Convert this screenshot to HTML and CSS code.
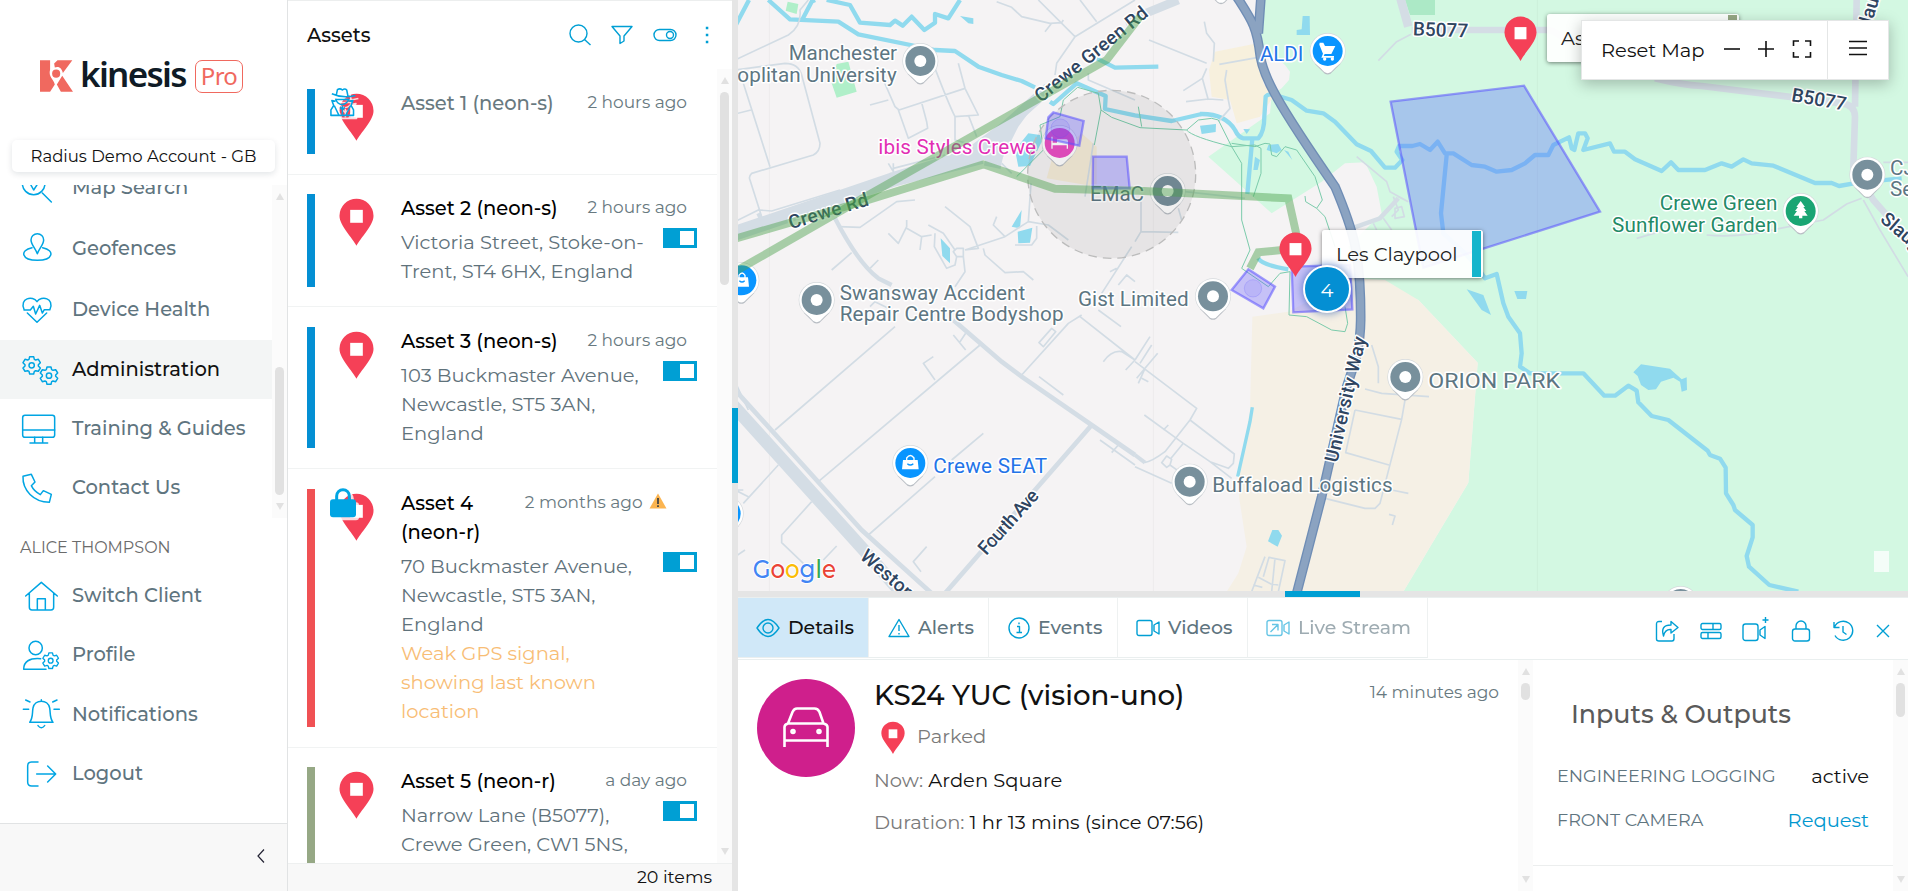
FILE: index.html
```html
<!DOCTYPE html>
<html lang="en">
<head>
  <meta charset="UTF-8">
  <title>Kinesis Pro</title>
  <meta name="viewport" content="width=device-width, initial-scale=1.0">
  <link rel="stylesheet" href="styles.css">
</head>
<body>

<svg class="defs" width="0" height="0">
  <symbol id="pin" viewBox="0 0 36 49">
    <path d="M18 48.500C14 40 .5 28 .5 17.500a17.500 17.500 0 0 1 35 0C35.500 28 22 40 18 48.500z" fill="#f54057"/>
    <path d="M11.500 11.500h13v13.300h-13z" fill="#fff"/>
  </symbol>
  <symbol id="gear" viewBox="-30 -30 60 60">
    <path d="M-8-18-6-26H6L8-18 12-16 20-18 26-8 20-2V2L26 8 20 18 12 16 8 18 6 26H-6L-8 18-12 16-20 18-26 8-20 2V-2L-26-8-20-18-12-16z"/>
    <circle r="8"/>
  </symbol>
  <symbol id="poi" viewBox="-60 -60 120 140">
    <path d="M-39 38-10 67Q0 74 10 67L39 38z" fill="#b9bec4"/>
    <circle r="54" fill="#d5d9dc"/>
    <path d="M-39 34-10 63Q0 70 10 63L39 34z" fill="#fff"/>
    <circle r="52" fill="#fff"/>
    <circle r="45"/>
  </symbol>
</svg>

<div class="app">
  <aside class="sidebar">
    <div class="logo">
      <svg class="logo-mark" viewBox="0 0 98 94">
        <path d="M0 0H30V28C24 50 40 56 44 72L30 94H0z M42 10 52 0H96L68 38C64 20 52 18 44 22z M98 94H62L50 72 66 46z" fill="#f0695f"/>
        <circle cx="48" cy="40" r="12" fill="#f0695f"/>
      </svg>
      <span class="logo-name">kinesis</span>
      <span class="logo-pro">Pro</span>
    </div>
    <div class="account">Radius Demo Account - GB</div>
    <div class="nav-scroll">
      <nav class="nav">
        <a class="nav-item tall"><svg viewBox="0 0 108 96"><circle cx="35" cy="34" r="34"/><path d="M61 63 88 90M24 34 35 54 48 34"/></svg><span>Map Search</span></a>
        <a class="nav-item tall"><svg viewBox="0 0 108 96"><path d="M46 62C40 46 27 34 27 21a19 19 0 0 1 38 0C65 34 52 46 46 62zM30 44C-8 52-2 82 46 82S100 52 62 44"/></svg><span>Geofences</span></a>
        <a class="nav-item tall"><svg viewBox="0 0 108 96"><path d="M6 46C-8 12 32 4 45 23 58 4 98 12 84 46M6 48H25L34 37 41 60 53 34 61 57 67 47H84M16 57 45 85 74 57"/></svg><span>Device Health</span></a>
        <a class="nav-item active"><svg viewBox="0 0 108 96"><use href="#gear" x="-1" y="4" width="60" height="60"/><use href="#gear" x="51" y="35" width="60" height="60"/></svg><span>Administration</span></a>
        <a class="nav-item"><svg viewBox="0 0 108 96"><rect x="2" y="7" width="96" height="66" rx="7"/><path d="M2 51H98M38 73V90M62 73V90M24 90H77"/></svg><span>Training &amp; Guides</span></a>
        <a class="nav-item"><svg viewBox="0 0 108 96"><path d="M3 13 28 7 39 30 28 41C34 54 44 62 55 68L64 56 88 67 82 91C35 90 1 55 3 13z"/></svg><span>Contact Us</span></a>
      </nav>
      <div class="scrollbar nav-bar"><i class="up"></i><b></b><i class="down"></i></div>
    </div>
    <div class="user-name">ALICE THOMPSON</div>
    <nav class="nav user-nav">
      <a class="nav-item"><svg viewBox="0 0 108 96"><path d="M11 48 58 7 106 48M22 39V82q0 8 8 8H87q8 0 8-8V39M46 90V56H70V90"/></svg><span>Switch Client</span></a>
      <a class="nav-item"><svg viewBox="0 0 108 96"><circle cx="41" cy="27" r="20"/><path d="M56 59C22 56 5 68 5 91H72"/><use href="#gear" x="59" y="38" width="54" height="54"/></svg><span>Profile</span></a>
      <a class="nav-item"><svg viewBox="0 0 108 96"><path d="M23 73C34 58 30 45 33 30 38 3 78 3 83 30 86 45 82 58 93 73zM48 83q10 13 20 0M4 34H20M96 34H112M11 6 24 12M105 6 92 12M58 5V10"/></svg><span>Notifications</span></a>
      <a class="nav-item"><svg viewBox="0 0 108 96"><path d="M48 12H29q-12 0-12 12V72q0 12 12 12H48M44 48H100M77 24 101 48 77 72"/></svg><span>Logout</span></a>
    </nav>
    <div class="sidebar-foot"><svg width="8" height="14" viewBox="0 0 8 14"><path d="M7 .5 1 7l6 6.500"/></svg></div>
  </aside>

  <section class="assets">
    <header class="assets-head">
      <h2>Assets</h2>
      <div class="head-icons">
        <svg width="22" height="22" viewBox="0 0 22 22"><circle cx="9.500" cy="9.500" r="8.500"/><path d="M15.500 15.500 21.500 21"/></svg>
        <svg width="22" height="20" viewBox="0 0 22 20"><path d="M1 1.500H21L13 11V16L9 18.500V11z"/></svg>
        <svg width="24" height="14" viewBox="0 0 24 14"><rect x="1" y="1.500" width="22" height="11" rx="5.500"/><circle cx="17" cy="7" r="3.500"/></svg>
        <svg width="4" height="18" viewBox="0 0 4 18"><path d="M.8 2h2.500M.8 9h2.500M.8 16h2.500" stroke-width="2.500"/></svg>
      </div>
    </header>
    <div class="list-wrap">
      <ul class="list">
        <li class="asset a1 muted">
          <span class="bar blue"></span>
          <div class="marker"><svg class="pin"><use href="#pin"/></svg>
            <svg class="badge spy" viewBox="0 0 84 96"><path d="M6 18Q40 34 82 24M20 24 24 5Q32-1 40 6 48-1 54 6L58 26M18 34Q22 50 38 54 56 50 62 34M20 37H60M18 42 6 40 12 56 3 70V88H76V70L68 56 74 40 62 42M14 57 28 86M66 57 52 86M40 58V84M32 62 40 70 48 62"/></svg>
          </div>
          <div class="info"><div class="row"><h3>Asset 1 (neon-s)</h3><time>2 hours ago</time></div></div>
        </li>
        <li class="asset a2">
          <span class="bar blue"></span>
          <div class="marker"><svg class="pin"><use href="#pin"/></svg></div>
          <div class="info"><div class="row"><h3>Asset 2 (neon-s)</h3><time>2 hours ago</time></div>
            <div class="row"><p>Victoria Street, Stoke-on-<br>Trent, ST4 6HX, England</p><span class="toggle"></span></div></div>
        </li>
        <li class="asset a3">
          <span class="bar blue"></span>
          <div class="marker"><svg class="pin"><use href="#pin"/></svg></div>
          <div class="info"><div class="row"><h3>Asset 3 (neon-s)</h3><time>2 hours ago</time></div>
            <div class="row"><p>103 Buckmaster Avenue,<br>Newcastle, ST5 3AN,<br>England</p><span class="toggle"></span></div></div>
        </li>
        <li class="asset a4">
          <span class="bar red"></span>
          <div class="marker"><svg class="pin"><use href="#pin"/></svg>
            <svg class="badge lock" viewBox="0 0 78 90"><path d="M20 40V24a19 19 0 0 1 38 0V40" fill="none" stroke="#00a5e3" stroke-width="9"/><rect y="34" width="78" height="54" rx="9" fill="#00a5e3"/></svg>
          </div>
          <div class="info"><div class="row"><h3>Asset 4<br>(neon-r)</h3><time>2 months ago <svg width="18" height="16" viewBox="0 0 18 16"><path d="M9 .5 17.500 15.500H.5z" fill="#fbb450"/><path d="M9 5v6M9 12.300v1.700" stroke="#444" stroke-width="1.800"/></svg></time></div>
            <div class="row"><p>70 Buckmaster Avenue,<br>Newcastle, ST5 3AN,<br>England<br><em>Weak GPS signal,<br>showing last known<br>location</em></p><span class="toggle"></span></div></div>
        </li>
        <li class="asset a5">
          <span class="bar olive"></span>
          <div class="marker"><svg class="pin"><use href="#pin"/></svg></div>
          <div class="info"><div class="row"><h3>Asset 5 (neon-r)</h3><time>a day ago</time></div>
            <div class="row"><p>Narrow Lane (B5077),<br>Crewe Green, CW1 5NS,</p><span class="toggle"></span></div></div>
        </li>
      </ul>
      <div class="scrollbar list-bar"><i class="up"></i><b></b><i class="down"></i></div>
    </div>
    <footer class="assets-foot">20 items</footer>
  </section>

  <div class="split-v"><span></span></div>

  <main class="main">
    <div class="map">
      <svg class="map-canvas" viewBox="0 0 3510 1773">
        <!-- land -->
        <g transform="translate(1191 0)">
          <path class="park" d="M385 0 375 130 450 195 465 215 462 240 440 265 410 285 405 340 220 470 410 640 560 545 630 490 690 487 725 560 740 640 690 690 640 740 690 840 850 900 1028 1088 1000 1448 805 1775H2400V0z"/>
          <path class="site" d="M352 950 460 935 650 835 750 840 850 900 1028 1088 1000 1448 805 1775H275L310 1720 335 1640 312 1490 310 1430 345 1230z"/>
          <path d="M240 155 375 128 385 250 415 290 375 350 305 370 285 300 230 290 222 210z" fill="#f7f0dd"/>
          <path d="M810 0H900V45H825z" fill="#ace9c6"/>
        </g>
        <g transform="translate(-9 0)">
          <path d="M1040 400 1085 440V560L935 535 950 480z" fill="#f5ecd8"/>
          <path d="M158 5 190 12 185 42 152 32zM305 192 340 185 365 275 305 293 290 250z" fill="#b0efc9"/>
        </g>
        <path class="grid" d="M94 0V1773M1246 0V1773M2398 0V1773"/>

        <!-- water -->
        <g class="water">
          <path transform="translate(-9 0)" d="M0 80 42 0M100 0 165 58 310 65 370 103 600 150 660 153 730 200 800 225 860 243 900 262M200 62 230 5 240 0M275 0 345 15 375 68 465 75 480 62 503 77 530 50 568 90 600 68V42L640 55 675 0M1085 175 1140 203 1270 200M945 305 955 312 1025 250 1112 288 1110 327 1200 346 1310 363 1400 342"/>
          <path transform="translate(1191 0)" d="M195 342Q270 340 300 390 310 412 325 415H370Q388 395 388 350L392 290Q400 280 420 285L470 300 515 332 565 340 600 365 665 433 708 453 750 503H780L802 480 785 455 792 438H832L855 432 885 450 908 425 930 460 955 460 1010 495 1050 500 1085 515 1130 510 1170 490 1200 465 1240 465 1255 435 1302 412 1310 445 1318 450 1330 400H1350L1358 415 1345 450 1425 430 1437 455H1470L1500 478 1580 513 1608 487 1630 510H1710L1760 490 1790 500 1825 478 1850 490 1915 497 2040 549H2090L2112 558 2170 548 2300 535M352 415 337 582M935 465 918 640 925 700 990 760 1030 805 1050 835 1085 822 1105 910 1120 950 1155 1000 1160 1060 1155 1100 1185 1120H1345L1408 1187H1440L1480 1157 1505 1172 1510 1207 1550 1248 1600 1260 1718 1352 1725 1365 1755 1376 1772 1403 1773 1480 1795 1515 1800 1530 1853 1575V1612L1835 1668 1842 1700 1903 1755 1990 1775M370 775Q380 795 460 808"/>
          <path transform="translate(1191 0)" stroke-width="10" d="M352 1222 345 1265 308 1430"/>
        </g>
        <g class="lake">
          <path transform="translate(-9 0)" d="M675 48 715 55V72L700 70zM840 450 880 400 915 405 920 425 885 498 850 500zM830 680 860 630 855 685zM848 695 892 683 885 728 850 730zM617 715 645 745V790L622 768z"/>
          <path transform="translate(1191 0)" d="M503 48H524L525 105H485V90L500 88zM195 377 243 372 242 396 200 402zM325 387 345 388 335 402zM395 450 400 435 430 432 440 450 425 460zM360 470 375 480 368 510H355zM447 450 460 455 472 480zM995 868 1045 885 1068 945 1040 930zM1138 873H1177L1173 897H1147zM412 1590 430 1590 441 1607 428 1640 399 1624zM1495 1117 1518 1093 1605 1106 1640 1138 1655 1132 1656 1170 1640 1175 1635 1145 1615 1133 1578 1145 1563 1168 1540 1170 1518 1155 1508 1128z"/>
        </g>

        <!-- local roads -->
        <g class="lane">
          <path transform="translate(-9 0)" d="M0 180 160 105Q200 80 195 30L220 0M0 210 150 190Q190 190 200 225L255 430Q255 455 235 465L50 520Q40 530 45 540L80 650M25 250 105 500M0 342 48 330M405 315 460 300M445 240 480 320 492 330 690 265 730 345 660 350Q640 310 600 205M490 330 520 415 578 385 575 365 560 308M670 190 690 265M660 350V420L730 440M700 345 725 410M785 5 830 22 860 50 945 70 980 68 985 60M910 0 1020 110 965 190 960 225M1035 0 1085 65M1020 110 1200 0M930 95 950 70M1060 220V240L1200 300M475 490V515L460 490M475 505 630 465M310 680 375 682 485 605 540 600M630 620 705 680 730 745 690 750M460 700 490 730 515 680 515 660M515 685 560 710 555 750M560 710 590 705M580 675 625 700 660 750M600 700 598 740 635 805 660 795 665 770 655 755 665 745H685V770H665M690 750 810 710 880 665 888 550M810 710 775 675 785 650M880 665 940 675 1000 720M745 745 750 765 810 818 865 815 895 840M685 770 690 815 660 860M290 810 350 758M405 805 430 780M0 665 70 630 110 633 315 570M800 490 830 520M1075 430 1050 590M1125 815 1145 805M1150 855 1175 825 1200 845M1190 740 1100 880M905 678V715L890 735H840M0 1145 40 1230"/>
          <path transform="translate(1191 0)" d="M208 65 215 100 238 130 235 185M42 120 215 190M253 193 370 172M215 205 202 235 145 272M202 235 220 300M153 305 220 297 265 300M275 210 270 240 280 300 285 325 250 365M828 103 785 125 730 182M665 470 755 545 765 575 820 605M775 590 790 630 770 650M790 590 820 605M780 625 800 620 808 650 780 655zM715 670 725 690M745 655 770 690M0 725 18 695 130 697M18 695V605M130 625 140 660M150 575 330 595M0 1085 185 1225 165 1260 90 1355Q50 1385 30 1387L0 1365M165 1260 298 1362 295 1390 280 1405 225 1385 145 1330 28 1245M85 1290 100 1275M145 1330 108 1375M95 1368 110 1378 105 1395 95 1402 80 1388zM105 1395 140 1420M225 1385 290 1435M0 1400 110 1450M45 1010 0 1080M50 1035 15 1090M68 1060 30 1105 5 1135M30 1105 10 1150M20 1135 40 1145M710 1035 730 1100V1150M690 1167 740 1180 882 1190M660 1230 800 1258 810 1200M660 1230 632 1358 762 1395M800 1258 735 1510 720 1525H690L570 1495M770 1470 820 1480M762 1543 780 1548 772 1575M350 1775 390 1670M385 1730 402 1672 450 1682 430 1775M370 1732 408 1752 430 1755M420 1675 410 1775M355 1755 382 1762"/>
          <path transform="translate(2286 0)" d="M1150 487H1224M410 715 490 692M620 705Q720 715 840 685L970 660 1040 612 1085 595M1090 600 1140 690 1224 830"/>
          <path transform="translate(-9 900)" d="M120 390 480 80M250 545 735 135M600 240 565 190 595 170M400 705 600 530M650 480 745 400M655 105 692 150M675 125 692 100M0 570 40 590M25 610 130 495M230 605 140 705V728L205 790M0 570 25 570M0 770 30 750M575 740 535 785 558 815M860 225 1000 70 1040 45M912 128 950 85 962 95 925 140zM1090 30 1158 80M1035 50 1200 180M912 230 985 285M1105 185Q1130 150 1160 155L1200 180M1172 210 1200 180M1095 420 1200 495M1130 458 1150 435M405 20 420 5 460 25M265 780 305 738"/>
        </g>

        <!-- main roads -->
        <g class="road">
          <path transform="translate(-9 0)" stroke-width="44" d="M0 700 470 540 740 470"/>
          <path transform="translate(-9 0)" stroke-width="34" d="M730 470 790 400 940 265M750 480 800 490"/>
          <path transform="translate(-9 0)" fill="#d4dde6" stroke="none" d="M460 520 690 450 890 300 960 230 850 380 800 480 740 480z"/>
          <path transform="translate(-9 0)" stroke-width="13" d="M300 655Q370 790 430 835L470 855M70 640 80 660"/>
          <path transform="translate(-9 900)" stroke-width="38" d="M-20 300 400 765 500 880"/>
          <path transform="translate(-9 900)" stroke-width="14" d="M0 270 380 690 590 880M655 60 800 185 860 230 1070 375 1200 465M1070 375 630 880"/>
          <path transform="translate(1191 900)" stroke-width="12" d="M0 465 30 488"/>
          <path transform="translate(1191 0)" stroke-width="26" d="M-30 65 130 0M795 -10 820 80"/>
          <path transform="translate(1191 0)" stroke-width="13" d="M650 685 735 655 790 595"/>
          <path transform="translate(1191 0)" stroke-width="20" d="M830 90H1240Q1270 95 1300 130M1560 235Q1640 255 1700 258L2120 310Q2160 315 2160 350L2155 500 2215 600 2330 730M2165 0 2160 320"/>
        </g>
        <g transform="translate(1191 0)" class="trunk">
          <path d="M305-10C350 60 366 80 376 170 386 230 420 300 600 560 655 690 678 760 677 960 676 1050 655 1100 635 1160L560 1490 485 1780M378-10 370 100"/>
          <path class="core" d="M305-10C350 60 366 80 376 170 386 230 420 300 600 560 655 690 678 760 677 960 676 1050 655 1100 635 1160L560 1490 485 1780M378-10 370 100"/>
        </g>
        <g class="path">
          <path transform="translate(-9 0)" d="M845 530 925 450 915 375 975 350 985 300 1028 262 1090 280 1098 330 1078 435M1098 330 1130 352 1215 383 1355 390 1390 360 1430 355 1450 360 1490 440 1520 490V660L1545 750 1520 805M1355 390Q1370 410 1490 440L1560 435 1578 445V520L1555 590M1490 430 1560 440 1590 430 1605 432 1610 465 1625 470 1650 440 1685 450 1740 530 1762 600 1745 625 1712 605 1710 588M1745 625 1770 650 1800 740M1520 805 1600 860 1635 820 1665 815 1662 945 1715 950 1790 990 1830 995 1838 970 1830 920M1210 320 1220 380"/>
        </g>

        <!-- place markers -->
        <g fill="#78909c">
          <use href="#poi" x="487" y="123" width="120" height="140"/>
          <use href="#poi" x="1229" y="513" width="120" height="140"/>
          <use href="#poi" x="176" y="840" width="120" height="140"/>
          <use href="#poi" x="1365" y="829" width="120" height="140"/>
          <use href="#poi" x="1942" y="1071" width="120" height="140"/>
          <use href="#poi" x="1295" y="1385" width="120" height="140"/>
          <use href="#poi" x="3328" y="464" width="120" height="140"/>
          <use href="#poi" x="2768" y="1752" width="120" height="140"/>
          <use href="#poi" x="1389" y="-118" width="120" height="140"/>
        </g>
        <g fill="#0995ff">
          <use href="#poi" x="1709" y="93" width="120" height="140"/>
          <use href="#poi" x="457" y="1329" width="120" height="140"/>
          <use href="#poi" x="-50" y="781" width="120" height="140"/>
          <use href="#poi" x="-97" y="1481" width="120" height="140"/>
        </g>
        <use href="#poi" x="905" y="369" width="120" height="140" fill="#ea4fc4"/>
        <use href="#poi" x="3128" y="573" width="120" height="140" fill="#1aa573"/>
        <g fill="#fff">
          <circle cx="547" cy="183" r="18"/><circle cx="1289" cy="573" r="18"/><circle cx="236" cy="900" r="18"/><circle cx="1425" cy="889" r="18"/>
          <circle cx="2002" cy="1131" r="18"/><circle cx="1355" cy="1445" r="18"/><circle cx="3388" cy="524" r="18"/>
          <path d="M1745 128H1756L1761 138H1792L1780 162H1760L1757 168H1788V173H1750L1755 161 1744 134zM495 1380H539L542 1408H492z"/>
          <circle cx="1760" cy="177" r="5"/><circle cx="1783" cy="177" r="5"/>
          <path d="M3188 603 3201 621H3196L3205 633H3199L3209 647H3193V655H3183V647H3167L3177 633H3171L3180 621H3175z"/>
          <path d="M-4 832H30L33 860H-8zM940 410H944V428H957V418H985Q990 418 990 424V446H986V436H944V446H940z"/>
        </g>
        <path d="M506 1381V1374q11-15 22 0V1381M3 834V826q9-14 18 0V834" fill="none" stroke="#fff" stroke-width="4"/>
        <path d="M508 1391q9 8 18 0M4 842q8 8 16 0" fill="none" stroke="#0995ff" stroke-width="4"/>

        <!-- labels -->
        <g class="label">
          <text x="152" y="180" textLength="325">Manchester</text>
          <text x="-2" y="245" textLength="478">oplitan University</text>
          <text x="305" y="899" textLength="557">Swansway Accident</text>
          <text x="305" y="963" textLength="672">Repair Centre Bodyshop</text>
          <text x="1020" y="917" textLength="332">Gist Limited</text>
          <text x="1056" y="602" textLength="162">EMaC</text>
          <text x="2071" y="1163" textLength="395" lengthAdjust="spacingAndGlyphs">ORION PARK</text>
          <text x="1423" y="1475" textLength="541">Buffaload Logistics</text>
          <text x="3456" y="524">CJ</text>
          <text x="3456" y="588">Ser</text>
        </g>
        <g class="label shop">
          <text x="1566" y="183" textLength="130">ALDI</text>
          <text x="586" y="1419" textLength="341">Crewe SEAT</text>
        </g>
        <text class="label hotel" x="421" y="461" textLength="473">ibis Styles Crewe</text>
        <g class="label garden">
          <text x="2765" y="630" textLength="353">Crewe Green</text>
          <text x="2622" y="695" textLength="496">Sunflower Garden</text>
        </g>
        <g class="label street">
          <text transform="translate(158 688) rotate(-17)" textLength="248">Crewe Rd</text>
          <text transform="translate(909 309) rotate(-39)" textLength="418">Crewe Green Rd</text>
          <text transform="translate(2024 106) rotate(2)" textLength="166">B5077</text>
          <text transform="translate(3158 303) rotate(10)" textLength="166">B5077</text>
          <text transform="translate(1798 1390) rotate(-77)" textLength="385">University Way</text>
          <text transform="translate(745 1668) rotate(-48)" textLength="240">Fourth Ave</text>
          <text transform="translate(363 1674) rotate(41)" textLength="195">Weston</text>
          <text transform="translate(3424 662) rotate(41)">Slaughter</text>
          <text transform="translate(3402 72) rotate(-74)">laughter</text>
        </g>

        <!-- drawn zones -->
        <circle class="zone-circle" cx="1121" cy="523" r="252"/>
        <g class="zone">
          <path transform="translate(-9 0)" d="M955 337 1046 363 1033 437 932 415 940 352zM1074 470H1175L1184 565H1073z"/>
          <path transform="translate(1191 0)" d="M340 808 420 860 385 925 290 870zM470 800 645 795 652 928 475 937z"/>
          <path class="field" transform="translate(1191 0)" d="M767 305 1167 257 1395 635 865 803z"/>
          <circle cx="967" cy="385" r="28"/>
          <circle cx="1545" cy="865" r="26"/>
        </g>

        <!-- vehicle tracks -->
        <g transform="translate(-9 0)" class="track">
          <path d="M0 815 395 588 1115 180 1215 50"/>
          <path d="M0 716 400 600 745 493 960 566 1210 572 1660 595 1688 720"/>
          <path d="M1640 750 1570 757 1545 805"/>
        </g>

        <text class="google" x="44" y="1735" textLength="250" lengthAdjust="spacingAndGlyphs"><tspan fill="#4285f4">G</tspan><tspan fill="#ea4335">o</tspan><tspan fill="#fbbc05">o</tspan><tspan fill="#4285f4">g</tspan><tspan fill="#34a853">l</tspan><tspan fill="#ea4335">e</tspan></text>
        <path d="M3408 1653H3453V1716H3408z" fill="#fff" opacity=".75"/>
      </svg>

      <svg class="map-pin pin-a"><use href="#pin"/></svg>
      <div class="tip tip-a">As<i class="olive"></i></div>
      <div class="tip tip-b">Les Claypool<i class="teal"></i></div>
      <svg class="map-pin pin-b"><use href="#pin"/></svg>
      <div class="cluster">4</div>

      <div class="map-tools">
        <div class="tools-left">
          <span class="reset">Reset Map</span>
          <svg width="18" height="18" viewBox="0 0 18 18"><path d="M1 9H17"/></svg>
          <svg width="18" height="18" viewBox="0 0 18 18"><path d="M1 9H17M9 1V17"/></svg>
          <svg width="20" height="20" viewBox="0 0 20 20"><path d="M1.500 7V2H7M13 2H18.500V7M18.500 13V18H13M7 18H1.500V13"/></svg>
        </div>
        <div class="tools-menu"><svg width="18" height="16" viewBox="0 0 18 16"><path d="M0 1.500H18M0 8H18M0 14.500H18"/></svg></div>
      </div>
    </div>

    <div class="split-h"><span></span></div>

    <section class="details">
      <header class="tabs">
        <a class="tab t1 on"><svg width="24" height="20" viewBox="0 0 24 20"><path d="M1 10Q12-7 23 10 12 27 1 10z"/><circle cx="12" cy="10" r="5"/></svg><span>Details</span></a>
        <a class="tab t2"><svg width="22" height="20" viewBox="0 0 22 20"><path d="M11 1.500 21 18.500H1zM11 7V13M11 15V16.500"/></svg><span>Alerts</span></a>
        <a class="tab t3"><svg width="22" height="22" viewBox="0 0 22 22"><circle cx="11" cy="11" r="10"/><path d="M9 9.500H11.500V15.500M8.500 15.500H14M11 5.500V7.200"/></svg><span>Events</span></a>
        <a class="tab t4"><svg width="24" height="18" viewBox="0 0 24 18"><rect x="1" y="1.500" width="15" height="15" rx="2"/><path d="M18 6 23 3V15L18 12z"/></svg><span>Videos</span></a>
        <a class="tab t5"><svg width="24" height="18" viewBox="0 0 24 18"><rect x="1" y="1.500" width="15" height="15" rx="2"/><path d="M18 6 23 3V15L18 12zM4.500 13 11.500 6M6 5.500H12V11.500"/></svg><span>Live Stream</span></a>
        <div class="actions">
          <svg width="24" height="24" viewBox="0 0 24 24"><path d="M7 2.500H4Q1.500 2.500 1.500 5V20Q1.500 22 4 22H17Q19 22 19 19.500V15M8.500 17Q5 6 16 6V2.500L23 8.500 16 14V10.500Q10 10 8.500 17z"/></svg>
          <svg width="22" height="18" viewBox="0 0 22 18"><rect x="1" y="1.500" width="20" height="6" rx="1.500"/><rect x="1" y="10.500" width="20" height="6" rx="1.500"/><path d="M13 1.500V7.500M8 10.500V16.500"/></svg>
          <svg class="cam" width="27" height="26" viewBox="0 0 27 26"><rect x="1" y="8" width="15" height="16.500" rx="2.500"/><path d="M18 14 23 10.500V22.500L18 19zM23.500 1V7M20.500 4H26.500"/></svg>
          <svg width="20" height="22" viewBox="0 0 20 22"><rect x="1.500" y="9" width="17" height="12" rx="2.500"/><path d="M5 9V6A5 5 0 0 1 15 6V9"/></svg>
          <svg width="22" height="22" viewBox="0 0 22 22"><path d="M2 2V7.500H7.500M2.500 7A9.500 9.500 0 1 1 3 15.500M11 6V12L14.500 14.500"/></svg>
          <svg width="14" height="16" viewBox="0 0 14 16"><path d="M1 2 13 14M13 2 1 14"/></svg>
        </div>
      </header>
      <div class="details-body">
        <div class="vehicle">
          <div class="avatar"><svg width="46" height="42" viewBox="0 0 46 42"><path d="M1.500 40V20Q1.500 17.500 5 16.500L9.500 5Q11 1.500 14 1.500H31.500Q35 1.500 36.500 5L40.500 16.500Q44.500 17.500 44.500 20V40M5 16.500H41M1.500 33.500H44.500"/><circle cx="10" cy="24.500" r="1.500"/><circle cx="36" cy="24.500" r="1.500"/></svg></div>
          <div class="vehicle-info">
            <div class="row"><h1>KS24 YUC (vision-uno)</h1><time>14 minutes ago</time></div>
            <div class="status"><svg class="pin-sm"><use href="#pin"/></svg><span>Parked</span></div>
            <p>Now: <b>Arden Square</b></p>
            <p>Duration: <b>1 hr 13 mins (since 07:56)</b></p>
          </div>
        </div>
        <div class="scrollbar details-bar"><i class="up"></i><b></b><i class="down"></i></div>
        <div class="io">
          <h2>Inputs &amp; Outputs</h2>
          <div class="io-row"><span>ENGINEERING LOGGING</span><strong>active</strong></div>
          <div class="io-row"><span>FRONT CAMERA</span><a>Request</a></div>
        </div>
        <div class="scrollbar io-bar"><i class="up"></i><b></b><i class="down"></i></div>
      </div>
    </section>
  </main>
</div>

</body>
</html>
```
FILE: styles.css
```css
* {
  box-sizing: border-box;
}
body {
  margin: 0;
  font-family: 'Montserrat', 'Inter', sans-serif;
  font-size: 19.5px;
  color: #111;
  background: #fff;
  overflow: hidden;
}
h1, h2, h3, p, ul {
  margin: 0;
  padding: 0;
  font-weight: 400;
}
.defs {
  position: absolute;
}
.app {
  display: flex;
  width: 1908px;
  height: 891px;
}
.row {
  display: flex;
  justify-content: space-between;
}

/* scrollbars */
.scrollbar {
  display: flex;
  flex-direction: column;
  align-items: center;
  width: 15px;
  background: #fbfbfb;
  flex: none;
}
.scrollbar b {
  width: 9px;
  border-radius: 5px;
  background: #e1e1e1;
}
.scrollbar i {
  border: 4.5px solid transparent;
}
.scrollbar .up {
  border-top: 0;
  border-bottom: 7px solid #e1e1e1;
  margin-top: 8px;
}
.scrollbar .down {
  border-bottom: 0;
  border-top: 7px solid #e1e1e1;
  margin-top: auto;
  margin-bottom: 8px;
}

/* sidebar */
.sidebar {
  display: flex;
  flex-direction: column;
  width: 288px;
  border-right: 1px solid #e1e3e4;
}
.logo {
  display: flex;
  align-items: center;
  height: 140px;
  padding: 12px 0 0 40px;
}
.logo-mark {
  width: 33px;
  height: 32px;
  flex: none;
}
.logo-name {
  width: 123px;
  flex: none;
  padding-left: 7px;
  font: 600 35px/40px 'Noto Sans', sans-serif;
  letter-spacing: -1.7px;
  color: #0f1b26;
  margin-top: -4px;
}
.logo-pro {
  width: 48px;
  height: 33px;
  flex: none;
  margin-left: -1px;
  border: 1.5px solid #f0695f;
  border-radius: 7px;
  color: #f0695f;
  text-align: center;
  font: 400 24px/29px 'Noto Sans', sans-serif;
  letter-spacing: -.7px;
}
.account {
  width: 263px;
  height: 32px;
  margin-left: 12px;
  flex: none;
  border-radius: 5px;
  text-align: center;
  font-size: 16.5px;
  line-height: 32px;
  box-shadow: 0 2px 6px rgba(0,30,50,.12);
}
.nav-scroll {
  display: flex;
  height: 333px;
  margin-top: 13px;
  overflow: hidden;
  flex: none;
}
.nav-scroll .nav {
  width: 272px;
  margin-top: -28px;
}
.nav-item {
  display: flex;
  align-items: center;
  height: 59px;
  padding-left: 22px;
  gap: 14px;
  color: #5f757f;
  font-weight: 500;
}
.nav-item span {
  margin-top: -1px;
}
.nav-item.tall {
  height: 61px;
}
.nav-item.active {
  background: #f3f5f5;
  color: #111;
}
.nav-item svg {
  width: 36px;
  height: 32px;
  overflow: visible;
  fill: none;
  stroke: #00a5e3;
  stroke-width: 4.5;
  stroke-linejoin: round;
  stroke-linecap: round;
}
.nav-bar b {
  height: 128px;
  margin-top: 167px;
}
.user-name {
  padding: 19px 0 0 20px;
  height: 48px;
  font-size: 16px;
  line-height: 22px;
  color: #6b6b6b;
}
.user-nav .nav-item {
  height: 59.3px;
}
.sidebar-foot {
  display: flex;
  align-items: center;
  justify-content: flex-end;
  margin-top: auto;
  height: 68px;
  padding: 0 22px 4px 0;
  border-top: 1px solid #e1e3e4;
  background: #f8f8f8;
}
.sidebar-foot svg {
  fill: none;
  stroke: #223;
  stroke-width: 1.2;
}

/* assets list */
.assets {
  display: flex;
  flex-direction: column;
  width: 444px;
  border-top: 1px solid #eceeee;
}
.assets-head {
  display: flex;
  align-items: center;
  justify-content: space-between;
  height: 68px;
  padding: 0 23px 0 19px;
}
.assets-head h2 {
  font-size: 19.5px;
  font-weight: 500;
}
.head-icons {
  display: flex;
  align-items: center;
  gap: 20px;
}
.head-icons svg:last-child {
  margin-left: 8px;
}
.head-icons svg, .tab svg, .actions svg {
  fill: none;
  stroke: #009fd4;
  stroke-width: 1.4;
  stroke-linejoin: round;
}
.list-wrap {
  display: flex;
  height: 794px;
  overflow: hidden;
}
.list {
  width: 429px;
  list-style: none;
}
.list-bar b {
  height: 193px;
  margin-top: 8px;
}
.asset {
  display: flex;
  padding: 20px 30px 20px 19px;
  border-bottom: 1px solid #f1f3f3;
}
.a1 { height: 106px; }
.a2 { height: 132px; padding-top: 19px; padding-bottom: 19px; }
.a3 { height: 162px; }
.a4 { height: 279px; }
.a5 { height: 160px; padding-top: 19px; }
.bar {
  width: 8px;
}
.blue { background: #048fd3; }
.red { background: #f05154; }
.olive { background: #96a885; }
.teal { background: #15b5cc; }
.marker {
  position: relative;
  width: 35px;
  margin-left: 24px;
}
.pin {
  width: 35px;
  height: 49px;
  margin-top: 4px;
}
.badge {
  position: absolute;
  left: -9px;
  top: -1px;
  width: 26px;
  height: 30px;
  overflow: visible;
  filter: drop-shadow(3px 3px 0 rgba(255,255,255,.8));
}
.spy {
  fill: none;
  stroke: #00a5e3;
  stroke-width: 5;
  stroke-linejoin: round;
}
.info {
  flex: 1;
  padding-left: 27px;
}
.info h3 {
  font-size: 19.5px;
  line-height: 29px;
  font-weight: 500;
  color: #000;
}
.muted h3 {
  color: #687980;
}
.info time {
  font-size: 17px;
  line-height: 27px;
  color: #687980;
}
.info p {
  margin-top: 5px;
  line-height: 29.1px;
  color: #5f727b;
}
.info em {
  font-style: normal;
  color: #f8bd75;
}
.a4 time {
  padding-right: 20px;
}
.a4 time svg {
  vertical-align: -1px;
  margin-left: 2px;
}
.toggle {
  width: 34px;
  height: 20px;
  margin: 5px -10px 0 0;
  background: #fff;
  border: 3px solid #009fd4;
  border-left-width: 17px;
}
.assets-foot {
  height: 28px;
  padding-right: 20px;
  border-top: 1px solid #eef0f0;
  background: #f8f8f8;
  text-align: right;
  font-size: 17.5px;
  line-height: 26px;
}

/* splitters */
.split-v {
  width: 6px;
  background: #e5e5e5;
}
.split-v span {
  display: block;
  height: 75px;
  margin-top: 408px;
  background: #009fd4;
}
.split-h {
  height: 6px;
  background: #e5e5e5;
}
.split-h span {
  display: block;
  width: 75px;
  height: 6px;
  margin-left: 547px;
  background: #009fd4;
}

/* map */
.main {
  width: 1170px;
}
.map {
  position: relative;
  height: 591px;
  overflow: hidden;
  background: #f5f3f4;
}
.map-canvas {
  display: block;
  width: 1170px;
  height: 591px;
}
.park { fill: #d3f8e2; }
.site { fill: #f5f0e5; }
.grid {
  stroke: #000;
  stroke-opacity: .035;
  stroke-width: 3;
}
.water {
  fill: none;
  stroke: #90daee;
  stroke-width: 13;
  stroke-linejoin: round;
}
.lake { fill: #90daee; }
.lane {
  fill: none;
  stroke: #d2dce4;
  stroke-width: 5;
  stroke-linejoin: round;
}
.road {
  fill: none;
  stroke: #d4dde5;
}
.trunk {
  fill: none;
  stroke: #6f8db5;
  stroke-width: 29;
}
.trunk .core {
  stroke: #8ba3c1;
  stroke-width: 21;
}
.path {
  fill: none;
  stroke: #7bcbab;
  stroke-width: 3;
}
.zone-circle {
  fill: #000;
  fill-opacity: .06;
  stroke: #bcbcbc;
  stroke-width: 4;
  stroke-dasharray: 26 18;
}
.zone {
  fill: #5a50ff;
  fill-opacity: .3;
  stroke: #5a50ff;
  stroke-opacity: .55;
  stroke-width: 7;
}
.zone circle {
  fill-opacity: .1;
  stroke-opacity: .2;
  stroke-width: 3;
}
.zone .field {
  fill: #5060ff;
  fill-opacity: .33;
}
.track {
  fill: none;
  stroke: #4aa04a;
  stroke-opacity: .45;
  stroke-width: 24;
}
.label {
  font-family: 'Roboto', sans-serif;
  font-size: 62px;
  fill: #5d7682;
  stroke: #fff;
  stroke-width: 9;
  stroke-linejoin: round;
  paint-order: stroke;
}
.shop { fill: #2374e8; }
.hotel { fill: #e22fb4; }
.garden { fill: #238a66; }
.street {
  font-size: 57px;
  font-weight: 500;
  fill: #2f4561;
}
.google {
  font: 500 78px 'Montserrat', sans-serif;
  stroke: #fff;
  stroke-width: 6;
  paint-order: stroke;
}
.map-pin {
  position: absolute;
  width: 33px;
  height: 46px;
}
.pin-a { left: 766px; top: 16px; }
.pin-b { left: 541px; top: 232px; }
.tip {
  position: absolute;
  height: 48px;
  padding-left: 14px;
  border-radius: 3px;
  background: rgba(255,255,255,.93);
  box-shadow: 0 1px 4px rgba(0,0,0,.5);
  line-height: 48px;
  color: #222;
}
.tip i {
  position: absolute;
  top: 1px;
  right: 2px;
  width: 9px;
  height: 46px;
}
.tip-a { left: 809px; top: 14px; width: 192px; }
.tip-b { left: 584px; top: 230px; width: 161px; }
.cluster {
  position: absolute;
  left: 565px;
  top: 265px;
  width: 48px;
  height: 48px;
  border: 2px solid #fff;
  border-radius: 50%;
  background: #048fd3;
  box-shadow: 0 0 8px rgba(0,60,160,.6);
  color: #fff;
  text-align: center;
  line-height: 47px;
}
.map-tools {
  position: absolute;
  left: 843px;
  top: 20px;
  display: flex;
  width: 308px;
  height: 60px;
  border: 1px solid #e4e6e6;
  background: #fff;
  box-shadow: 0 4px 14px rgba(0,0,0,.25);
}
.map-tools svg {
  fill: none;
  stroke: #111;
  stroke-width: 1.6;
}
.tools-left {
  display: flex;
  align-items: center;
  gap: 16.5px;
  width: 246px;
  padding: 0 0 3px 19px;
  border-right: 1px solid #e4e6e6;
}
.reset {
  width: 105px;
  flex: none;
  padding-top: 3px;
}
.tools-menu {
  display: flex;
  flex: 1;
  align-items: center;
  justify-content: center;
  padding-bottom: 5px;
}

/* details panel */
.tabs {
  display: flex;
  height: 63px;
  border-top: 1px solid #eaefef;
  border-bottom: 1px solid #eaefef;
}
.tab {
  display: flex;
  align-items: center;
  height: 60px;
  border-right: 1px solid #eef1f1;
  border-bottom: 1px solid #eaefef;
  font-size: 18.9px;
  font-weight: 500;
  color: #5f757f;
}
.tab svg {
  flex: none;
  margin-right: 8px;
}
.t1 { width: 131px; padding-left: 18px; }
.t2 { width: 120px; padding-left: 19px; }
.t3 { width: 129px; padding-left: 19px; }
.t4 { width: 130px; padding-left: 18px; }
.t5 { width: 180px; padding-left: 18px; }
.t5 svg, .t5 span {
  opacity: .6;
}
.tab.on {
  background: #d0e8f8;
  color: #111;
}
.actions {
  display: flex;
  align-items: center;
  gap: 21px;
  margin-left: auto;
  padding: 4px 18px 0 0;
}
.actions svg:last-child {
  margin-left: 1px;
}
.cam {
  margin: -4px 1px 0 -1px;
}
.details-body {
  display: flex;
  height: 231px;
}
.vehicle {
  display: flex;
  width: 780px;
  padding: 19px 19px 0 19px;
}
.avatar {
  display: flex;
  align-items: center;
  justify-content: center;
  width: 98px;
  height: 98px;
  border-radius: 50%;
  background: #cf1f8c;
  flex: none;
}
.avatar svg {
  fill: none;
  stroke: #fff;
  stroke-width: 2.6;
}
.vehicle-info {
  flex: 1;
  padding-left: 19px;
  margin-top: -1px;
  color: #7a7a7a;
}
.vehicle-info h1 {
  font-size: 27.7px;
  line-height: 34px;
  font-weight: 500;
  color: #111;
}
.vehicle-info time {
  font-size: 17px;
  line-height: 28px;
  color: #687980;
}
.status {
  display: flex;
  align-items: center;
  height: 48px;
  gap: 12px;
  padding: 0 0 0 7px;
}
.pin-sm {
  width: 24px;
  height: 34px;
  margin-top: 4px;
}
.vehicle-info p {
  line-height: 41.500px;
}
.vehicle-info b {
  font-weight: 400;
  color: #111;
}
.details-bar b {
  height: 17px;
  margin-top: 8px;
}
.io-bar b {
  height: 34px;
  margin-top: 8px;
}
.io {
  width: 360px;
  height: 206px;
  padding: 32px 24px 0 24px;
  border-bottom: 1px solid #eceeee;
}
.io h2 {
  padding-left: 14px;
  margin-bottom: 18px;
  font-size: 25.3px;
  line-height: 44px;
  font-weight: 500;
  color: #5a5a5a;
}
.io-row {
  display: flex;
  justify-content: space-between;
  line-height: 44px;
}
.io-row span {
  font-size: 17.6px;
  color: #5f757f;
}
.io-row strong {
  font-weight: 400;
}
.io-row a {
  color: #0097cf;
}
```
